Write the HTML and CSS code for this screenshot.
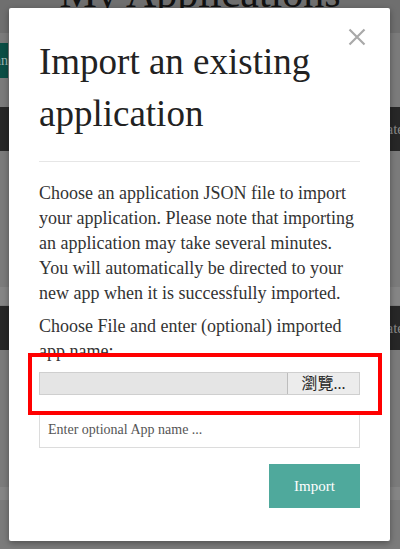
FILE: index.html
```html
<!DOCTYPE html>
<html>
<head>
<meta charset="utf-8">
<link rel="stylesheet" href="styles.css">
</head>
<body>
<div class="page">
  <header class="page-header"><h1 class="page-title">My Applications</h1></header>
  <div class="toolbar"><span class="new-btn">Import an</span></div>
  <div class="dark-bar"><span class="bar-text">Create</span></div>
  <div class="spacer-a"></div>
  <div class="light-band"></div>
  <div class="dark-bar"><span class="bar-text">Create</span></div>
  <div class="spacer-b"></div>
  <div class="light-band short"></div>
</div>

<div class="modal">
  <button class="close" aria-label="Close">
    <svg width="18" height="18" viewBox="0 0 18 18"><path d="M1.5 1.5 L16.5 16.5 M16.5 1.5 L1.5 16.5" stroke="#a9a9a9" stroke-width="2.2" fill="none"/></svg>
  </button>
  <h2 class="modal-title">Import an existing application</h2>
  <hr class="divider">
  <p class="desc">Choose an application JSON file to import your application. Please note that importing an application may take several minutes. You will automatically be directed to your new app when it is successfully imported.</p>
  <p class="label">Choose File and enter (optional) imported app name:</p>
  <div class="file-field"><span class="file-path"></span><span class="browse">瀏覽...</span></div>
  <input class="name-input" type="text" placeholder="Enter optional App name ...">
  <div class="actions"><button class="import-btn">Import</button></div>
</div>
<div class="highlight"></div>
</body>
</html>
```

FILE: styles.css
```css
html, body {
  margin: 0;
  padding: 0;
}
body {
  width: 400px;
  height: 549px;
  overflow: hidden;
  background: #7b7b7b;
  font-family: "Liberation Serif", "Noto Sans CJK TC", serif;
  position: relative;
}
.page {
  display: flex;
  flex-direction: column;
}
.page-header {
  height: 33px;
  background: #6f6f6f;
  overflow: hidden;
  position: relative;
}
.page-title {
  margin: 0;
  font-weight: normal;
  font-size: 42px;
  line-height: 42px;
  color: #111;
  text-align: center;
  margin-top: -28px;
}
.toolbar {
  height: 35px;
  margin-top: 10px;
  display: flex;
}
.new-btn {
  background: #0b4e45;
  color: #9fb7b3;
  width: 8px;
  overflow: hidden;
  direction: rtl;
  white-space: nowrap;
  font-size: 14px;
  line-height: 35px;
}
.dark-bar {
  height: 44px;
  margin-top: 29px;
  background: #272727;
  display: flex;
  justify-content: flex-end;
  align-items: center;
  overflow: hidden;
}
.bar-text {
  color: #8a8a8a;
  font-size: 15px;
  margin-right: -4px;
  white-space: nowrap;
}
.spacer-a { height: 136px; }
.light-band {
  height: 18px;
  background: #858585;
}
.light-band + .dark-bar { margin-top: 1px; }
.spacer-b { height: 137px; }
.light-band.short { height: 13px; }

.modal {
  position: absolute;
  left: 9px;
  top: 8px;
  width: 381px;
  height: 533px;
  box-sizing: border-box;
  background: #fff;
  border-radius: 2px;
  box-shadow: 0 2px 6px rgba(0,0,0,0.35);
  padding: 28px 30px 0 30px;
  display: flex;
  flex-direction: column;
}
.close {
  position: absolute;
  right: 24px;
  top: 20px;
  border: 0;
  background: none;
  padding: 0;
  width: 18px;
  height: 18px;
  display: block;
}
.close svg { display: block; }
.modal-title {
  margin: 0;
  font-weight: normal;
  font-size: 37px;
  line-height: 52px;
  color: #222;
}
.divider {
  border: 0;
  border-top: 1px solid #e6e6e6;
  margin: 21px 0 0 0;
  height: 0;
}
.desc {
  margin: 19px 0 0 0;
  font-size: 18px;
  line-height: 25px;
  color: #333;
}
.label {
  margin: 8px 0 0 0;
  font-size: 18px;
  line-height: 25px;
  color: #333;
}
.file-field {
  margin-top: 8px;
  height: 23px;
  box-sizing: border-box;
  border: 1px solid #cfcfcf;
  background: #e5e5e5;
  display: flex;
}
.file-path { flex: 1; }
.browse {
  width: 72px;
  box-sizing: border-box;
  border-left: 1px solid #bdbdbd;
  background: #ececec;
  font-size: 16px;
  line-height: 21px;
  text-align: center;
  color: #222;
}
.name-input {
  margin-top: 16px;
  height: 37px;
  box-sizing: border-box;
  border: 1px solid #dcdcdc;
  padding: 0 8px;
  font-family: "Liberation Serif", serif;
  font-size: 14px;
  outline: none;
}
.name-input::placeholder { color: #555; }
.actions {
  margin-top: 16px;
  display: flex;
  justify-content: flex-end;
}
.import-btn {
  width: 91px;
  height: 44px;
  border: 0;
  background: #4fa99c;
  color: #fff;
  font-family: "Liberation Serif", serif;
  font-size: 15px;
}
.highlight {
  position: absolute;
  left: 28px;
  top: 353px;
  width: 354px;
  height: 62px;
  box-sizing: border-box;
  border: 4px solid #ff0000;
}
```
